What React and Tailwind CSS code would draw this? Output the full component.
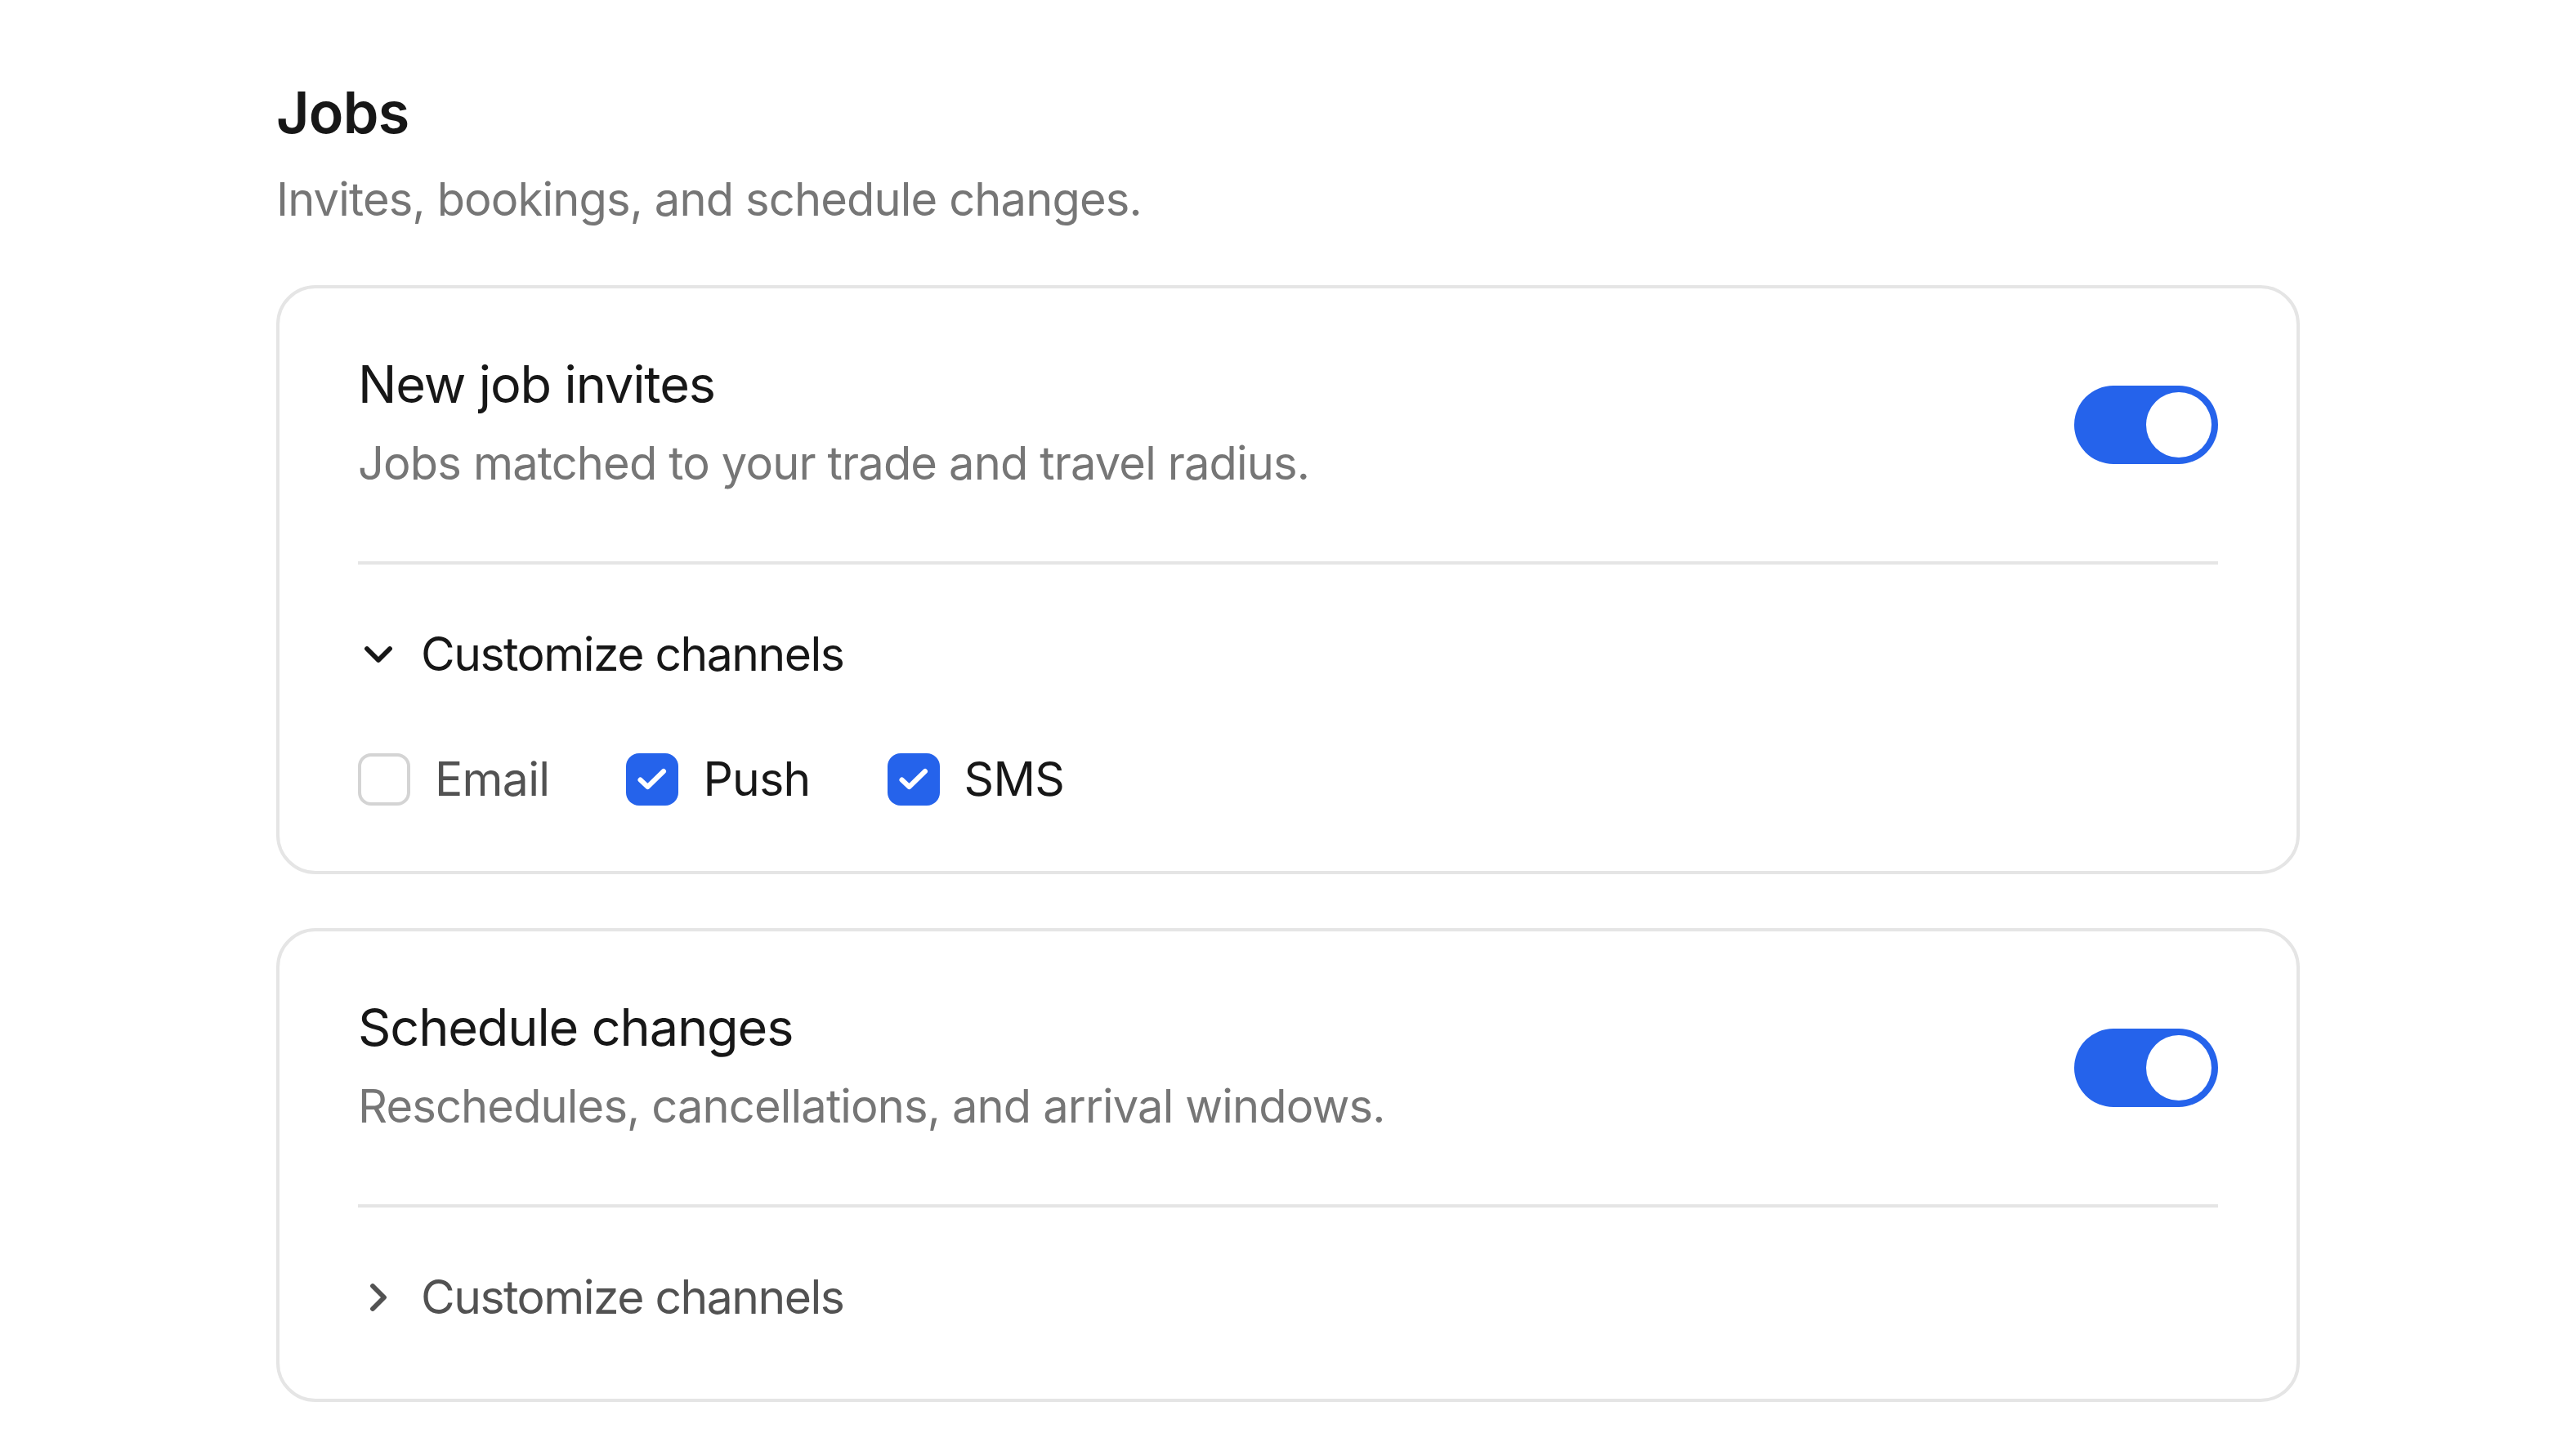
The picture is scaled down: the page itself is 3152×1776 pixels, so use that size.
import React, { useState } from "react";

const ChevronDown = ({ className }) => (
  <svg viewBox="0 0 24 24" fill="none" stroke="currentColor" strokeWidth="2.5" strokeLinecap="round" strokeLinejoin="round" className={className}>
    <path d="m6 9 6 6 6-6" />
  </svg>
);

const ChevronRight = ({ className }) => (
  <svg viewBox="0 0 24 24" fill="none" stroke="currentColor" strokeWidth="2.5" strokeLinecap="round" strokeLinejoin="round" className={className}>
    <path d="m9 18 6-6-6-6" />
  </svg>
);

const Toggle = ({ on, onChange }) => (
  <button
    type="button"
    role="switch"
    aria-checked={on}
    onClick={() => onChange(!on)}
    className={`flex h-[96px] w-[176px] shrink-0 items-center rounded-full p-[8px] ${on ? "justify-end bg-[#2563eb]" : "justify-start bg-[#d4d4d4]"}`}
  >
    <span className="block size-[80px] rounded-full bg-white" />
  </button>
);

const Channel = ({ label, checked, onToggle }) => (
  <button type="button" onClick={onToggle} className="flex items-center gap-[30px]">
    <span
      className={`flex size-[64px] items-center justify-center rounded-[16px] ${checked ? "bg-[#2563eb]" : "border-4 border-[#d4d4d4] bg-white"}`}
    >
      {checked && (
        <svg viewBox="0 0 64 64" className="size-[64px]" fill="none" stroke="white" strokeWidth="6" strokeLinecap="round" strokeLinejoin="round">
          <polyline points="17.5,32.5 26.5,41 46,22" />
        </svg>
      )}
    </span>
    <span className={`text-[57px] leading-[64px] tracking-[-0.012em] ${checked ? "text-[#171717]" : "text-[#525252]"}`}>{label}</span>
  </button>
);

const SettingCard = ({ title, desc, enabled, setEnabled, open, setOpen, channels, setChannels }) => (
  <div className="rounded-[48px] border-4 border-[#e5e5e5] bg-white px-[96px] pt-[80px] pb-[80px]">
    <div className="flex items-center justify-between pb-[80px]">
      <div>
        <h3 className="text-[63px] leading-[74px] tracking-[-0.018em] text-[#171717]">{title}</h3>
        <p className="mt-[20px] text-[56px] leading-[80px] tracking-[-0.015em] text-[#767676]">{desc}</p>
      </div>
      <Toggle on={enabled} onChange={setEnabled} />
    </div>
    <div className="border-t-4 border-[#e5e5e5] pt-[66px]">
      <button
        type="button"
        onClick={() => setOpen(!open)}
        className={`-ml-[3px] flex items-center gap-[24px] text-[57px] leading-[88px] tracking-[-0.026em] ${open ? "text-[#171717]" : "text-[#525252]"}`}
      >
        {open ? <ChevronDown className="size-[56px]" /> : <ChevronRight className="size-[56px]" />}
        <span>Customize channels</span>
      </button>
      {open && (
        <div className="mt-[77px] flex items-center gap-[94px]">
          {Object.keys(channels).map((key) => (
            <Channel
              key={key}
              label={key}
              checked={channels[key]}
              onToggle={() => setChannels({ ...channels, [key]: !channels[key] })}
            />
          ))}
        </div>
      )}
    </div>
  </div>
);

export default function App() {
  const [invites, setInvites] = useState(true);
  const [invitesOpen, setInvitesOpen] = useState(true);
  const [inviteChannels, setInviteChannels] = useState({ Email: false, Push: true, SMS: true });
  const [schedule, setSchedule] = useState(true);
  const [scheduleOpen, setScheduleOpen] = useState(false);
  const [scheduleChannels, setScheduleChannels] = useState({ Email: true, Push: true, SMS: false });

  return (
    <div className="min-h-screen bg-white font-['Inter',sans-serif]">
      <div className="mx-auto w-[2476px] pt-[88px] pb-[64px]">
        <h2 className="text-[70px] leading-[100px] font-semibold tracking-[-0.01em] text-[#171717]">Jobs</h2>
        <p className="mt-[16px] text-[56px] leading-[80px] tracking-[-0.015em] text-[#767676]">Invites, bookings, and schedule changes.</p>
        <div className="mt-[65px] flex flex-col gap-[66px]">
          <SettingCard
            title="New job invites"
            desc="Jobs matched to your trade and travel radius."
            enabled={invites}
            setEnabled={setInvites}
            open={invitesOpen}
            setOpen={setInvitesOpen}
            channels={inviteChannels}
            setChannels={setInviteChannels}
          />
          <SettingCard
            title="Schedule changes"
            desc="Reschedules, cancellations, and arrival windows."
            enabled={schedule}
            setEnabled={setSchedule}
            open={scheduleOpen}
            setOpen={setScheduleOpen}
            channels={scheduleChannels}
            setChannels={setScheduleChannels}
          />
        </div>
      </div>
    </div>
  );
}
